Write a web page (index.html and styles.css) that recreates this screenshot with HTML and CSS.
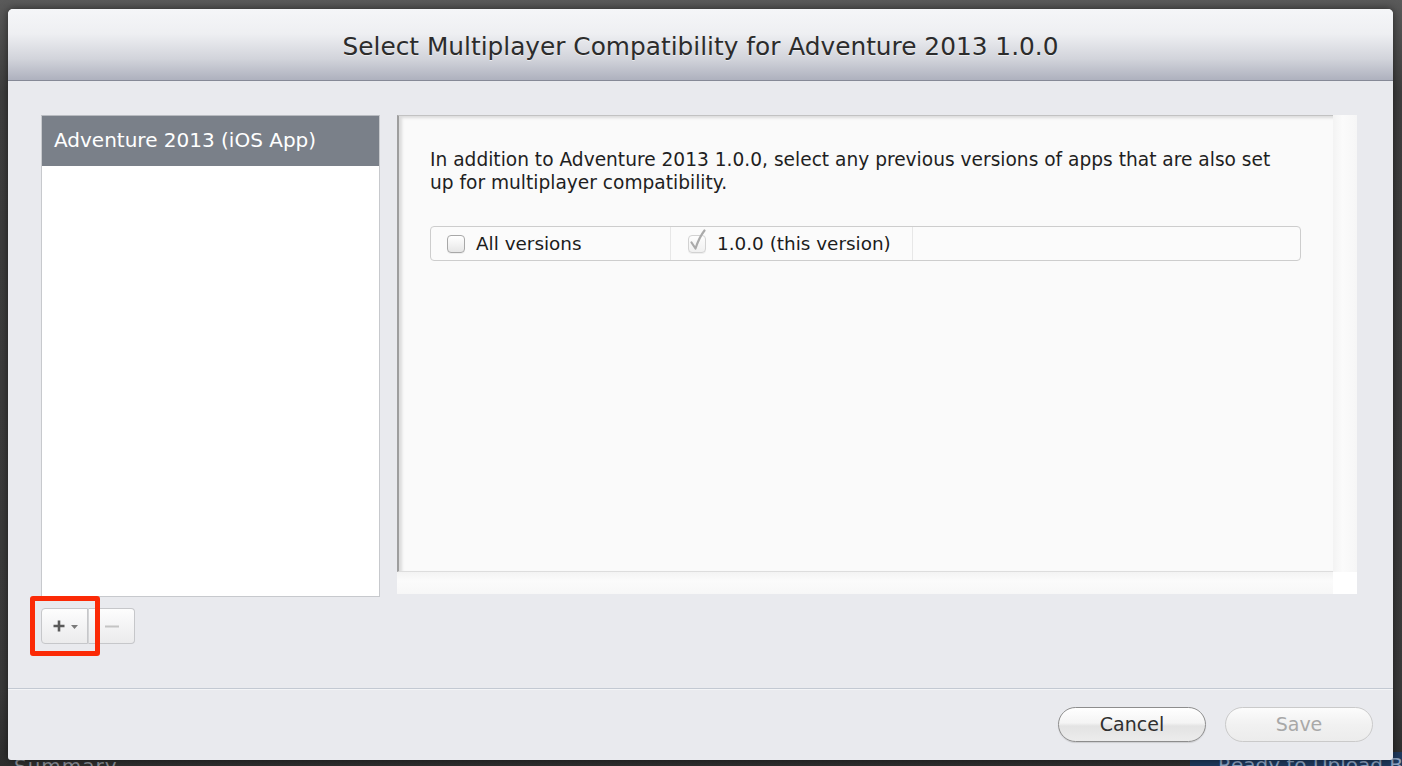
FILE: index.html
```html
<!DOCTYPE html>
<html lang="en">
<head>
<meta charset="utf-8">
<title>Select Multiplayer Compatibility</title>
<link rel="stylesheet" href="styles.css">
</head>
<body>
<div class="backdrop">
  <div class="bd-summary">Summary</div>
  <div class="bd-ready">Ready to Upload Binary</div>
</div>
<div class="dialog">
  <div class="titlebar">
    <h1 class="title">Select Multiplayer Compatibility for Adventure 2013 1.0.0</h1>
  </div>
  <div class="content">
    <div class="sidebar">
      <div class="applist">
        <div class="applist-item selected">Adventure 2013 (iOS App)</div>
      </div>
      <div class="segbtns">
        <button class="seg seg-add" type="button">
          <svg class="ico-plus" width="12" height="12" viewBox="0 0 12 12"><path d="M6 0.5V11.5M0.5 6H11.5" stroke="#5a5a5a" stroke-width="2.6" fill="none"/></svg>
          <svg class="ico-caret" width="7" height="4" viewBox="0 0 7 4"><path d="M0 0H7L3.5 4Z" fill="#7a7a7a"/></svg>
        </button>
        <button class="seg seg-remove" type="button">
          <svg width="14" height="3" viewBox="0 0 14 3"><path d="M0 1.5H14" stroke="#c4c4c4" stroke-width="2.2"/></svg>
        </button>
        <span class="highlight"></span>
      </div>
    </div>
    <div class="scrollview">
      <div class="scroll-content">
        <p class="intro">In addition to Adventure 2013 1.0.0, select any previous versions of apps that are also set up for multiplayer compatibility.</p>
        <div class="versions">
          <label class="vcell vcell-all"><span class="cb"></span>All versions</label>
          <label class="vcell vcell-this"><span class="cb cb-checked"><svg class="check" width="18" height="22" viewBox="0 0 18 22"><path d="M3.5 13.5L7.5 19.5C10 12 12.5 6.5 16.5 1.5" stroke="#aaaaaa" stroke-width="2.2" fill="none" stroke-linecap="round" stroke-linejoin="round"/></svg></span>1.0.0 (this version)</label>
          <div class="vcell vcell-empty"></div>
        </div>
      </div>
      <div class="vtrack"></div>
      <div class="htrack"></div>
      <div class="corner"></div>
    </div>
  </div>
  <div class="footer">
    <button class="pill" type="button">Cancel</button>
    <button class="pill pill-disabled" type="button">Save</button>
  </div>
</div>
</body>
</html>
```

FILE: styles.css
```css
* { box-sizing: border-box; }

html, body { margin: 0; }

body {
  width: 1402px;
  height: 766px;
  overflow: hidden;
  position: relative;
  padding: 9px 9px 6px 8px;
  background: linear-gradient(#5a5a5a, #3e3e3e 12%, #3a3a3a 90%, #2e2e2e);
  font-family: "DejaVu Sans", "Liberation Sans", sans-serif;
}

.backdrop {
  position: absolute;
  inset: 0;
  z-index: 0;
}

.bd-summary {
  position: absolute;
  left: 14px;
  top: 754px;
  font-size: 20px;
  color: #8a8f98;
  letter-spacing: 1px;
}

.bd-ready {
  position: absolute;
  left: 1190px;
  top: 752px;
  width: 212px;
  height: 14px;
  padding-left: 28px;
  background: #1f3a5e;
  color: #8ea4c2;
  font-size: 20px;
  line-height: 26px;
  white-space: nowrap;
  overflow: hidden;
}

.dialog {
  position: relative;
  z-index: 1;
  width: 1385px;
  height: 751px;
  display: flex;
  flex-direction: column;
  background: #e9eaee;
  border-radius: 5px 5px 3px 3px;
  overflow: hidden;
  box-shadow: 0 0 8px rgba(0, 0, 0, 0.55);
}

.titlebar {
  height: 72px;
  flex: none;
  display: flex;
  align-items: center;
  justify-content: center;
  padding-top: 3px;
  background: linear-gradient(#f5f6f8, #eeeff2 35%, #d2d4db 70%, #aeb1be);
  border-bottom: 1px solid #868a97;
}

.title {
  margin: 0;
  font-weight: normal;
  font-size: 24.8px;
  color: #2c2c2c;
  text-shadow: 0 1px 0 rgba(255, 255, 255, 0.55);
  white-space: nowrap;
}

.content {
  flex: 1;
  display: flex;
  gap: 17px;
  padding: 34px 36px 0 33px;
}

.sidebar {
  width: 339px;
  flex: none;
  display: flex;
  flex-direction: column;
}

.applist {
  height: 482px;
  background: #ffffff;
  border: 1px solid #c7c9cd;
  border-top-color: #b8bbc0;
}

.applist-item {
  height: 50px;
  line-height: 49px;
  padding-left: 12px;
  font-size: 20px;
  white-space: nowrap;
}

.applist-item.selected {
  background: #7a8089;
  color: #ffffff;
}

.segbtns {
  position: relative;
  margin-top: 11px;
  display: flex;
  height: 36px;
}

.seg {
  width: 47px;
  height: 36px;
  margin: 0;
  padding: 0;
  display: flex;
  align-items: center;
  justify-content: center;
  background: linear-gradient(#fdfdfd, #f2f2f3 60%, #ebebec);
  border: 1px solid #c6c7ca;
  font: inherit;
}

.seg-add {
  border-radius: 4px 0 0 4px;
  gap: 6px;
  padding-left: 2px;
}

.seg-remove {
  border-radius: 0 4px 4px 0;
  border-left-color: #d3d4d6;
}

.ico-caret { margin-top: 1px; }

.highlight {
  position: absolute;
  left: -11px;
  top: -12px;
  width: 70px;
  height: 60px;
  border: 5px solid #fb2a06;
  border-radius: 3px;
  pointer-events: none;
}

.scrollview {
  width: 960px;
  height: 479px;
  flex: none;
  display: grid;
  grid-template-columns: 1fr 24px;
  grid-template-rows: 1fr 22px;
}

.scroll-content {
  background: #fafafa;
  border-left: 2px solid #9e9e9e;
  border-top: 1px solid #c2c2c2;
  border-bottom: 1px solid #dddddd;
  box-shadow: inset 3px 2px 3px rgba(0, 0, 0, 0.12);
  padding: 32px 30px 0 31px;
}

.intro {
  margin: 0;
  max-width: 858px;
  font-size: 18.6px;
  line-height: 23px;
  color: #1f1f1f;
}

.versions {
  margin-top: 32px;
  width: 871px;
  height: 35px;
  display: flex;
  background: #fbfbfb;
  border: 1px solid #cdcdcd;
  border-radius: 4px;
}

.vcell {
  display: flex;
  align-items: center;
  padding-left: 16px;
  font-size: 18.4px;
  color: #1c1c1c;
  white-space: nowrap;
  border-right: 1px solid #e7e7e7;
}

.vcell-all { width: 240px; }
.vcell-this { width: 242px; padding-left: 17px; }
.vcell-empty { flex: 1; border-right: none; }

.cb {
  position: relative;
  width: 18px;
  height: 18px;
  margin-right: 11px;
  border: 1px solid #a8a8a8;
  border-radius: 4px;
  background: linear-gradient(#ffffff, #f3f3f3 50%, #e6e6e6);
  box-shadow: 0 1px 0 rgba(0, 0, 0, 0.05);
}

.cb-checked {
  border-color: #d2d2d2;
  background: linear-gradient(#fdfdfd, #f0f0f0);
}

.check {
  position: absolute;
  left: -1px;
  top: -7px;
}

.vtrack {
  background: linear-gradient(to right, #f3f3f3, #fbfbfb 40%, #f6f6f6);
}

.htrack {
  background: linear-gradient(#f3f3f3, #fbfbfb 40%, #f7f7f7);
}

.corner {
  background: #ffffff;
}

.footer {
  height: 72px;
  flex: none;
  display: flex;
  justify-content: flex-end;
  align-items: flex-start;
  gap: 19px;
  padding: 18px 20px 0 0;
  border-top: 1px solid #c3c9d2;
  box-shadow: inset 0 1px 0 #f4f5f7;
}

.pill {
  width: 148px;
  height: 35px;
  margin: 0;
  padding: 0 0 1px;
  border-radius: 18px;
  border: 1px solid #8d8d8d;
  background: linear-gradient(#ffffff, #f4f4f4 45%, #e3e3e3 55%, #ececec);
  box-shadow: 0 1px 1px rgba(0, 0, 0, 0.12), inset 0 1px 0 #ffffff;
  font-family: "DejaVu Sans", "Liberation Sans", sans-serif;
  font-size: 19px;
  color: #303030;
}

.pill-disabled {
  border-color: #cacaca;
  background: linear-gradient(#fcfcfc, #f1f1f1 50%, #ececec);
  box-shadow: none;
  color: #a8a8a8;
}
```
